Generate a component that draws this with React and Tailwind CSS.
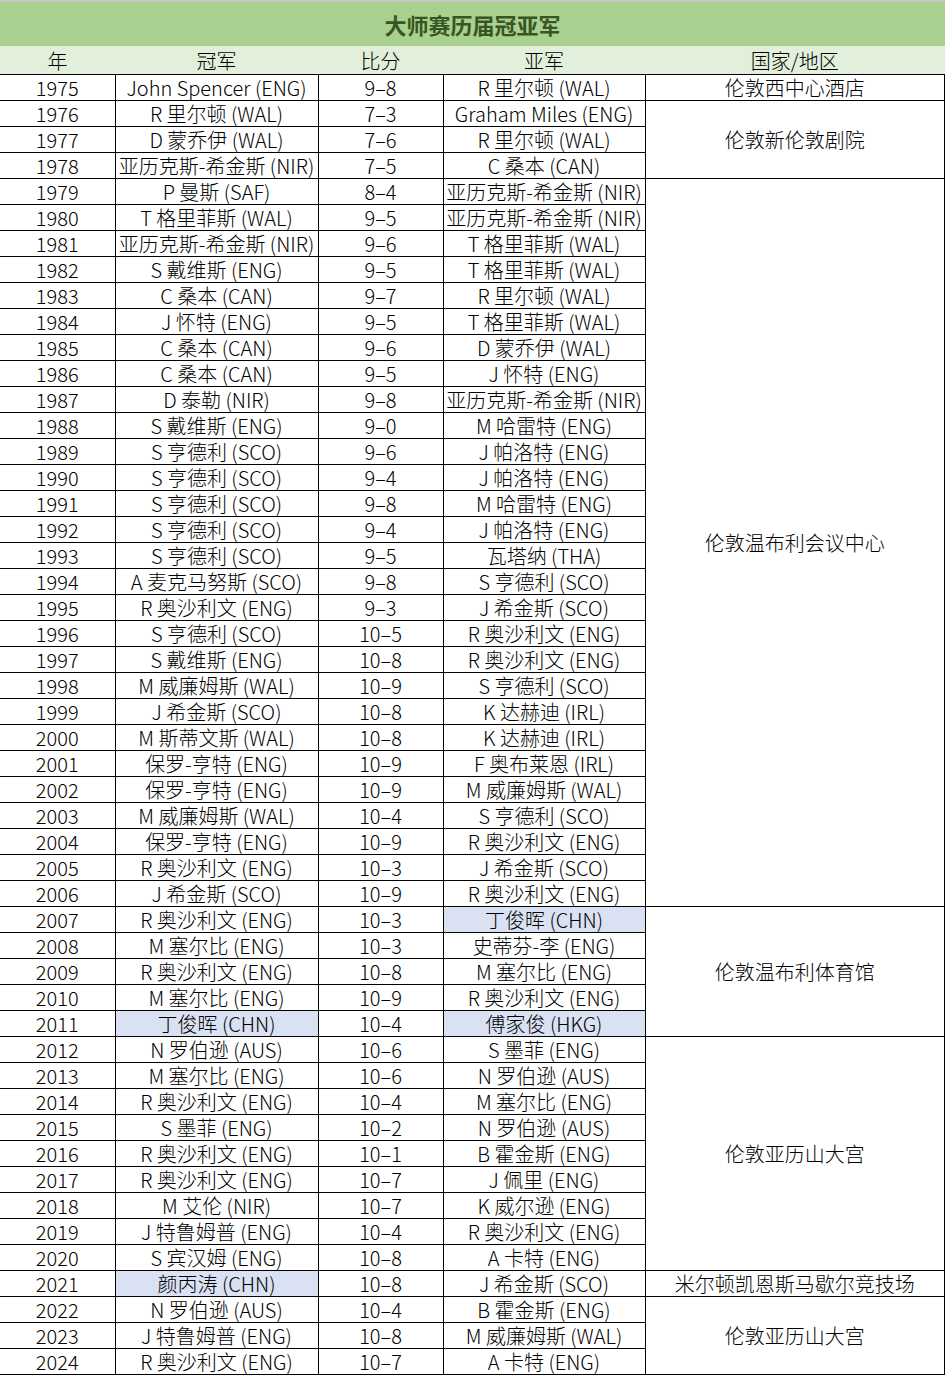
import React from "react";

const rows = [
  ["1975", "John Spencer (ENG)", "9–8", "R 里尔顿 (WAL)"],
  ["1976", "R 里尔顿 (WAL)", "7–3", "Graham Miles (ENG)"],
  ["1977", "D 蒙乔伊 (WAL)", "7–6", "R 里尔顿 (WAL)"],
  ["1978", "亚历克斯-希金斯 (NIR)", "7–5", "C 桑本 (CAN)"],
  ["1979", "P 曼斯 (SAF)", "8–4", "亚历克斯-希金斯 (NIR)"],
  ["1980", "T 格里菲斯 (WAL)", "9–5", "亚历克斯-希金斯 (NIR)"],
  ["1981", "亚历克斯-希金斯 (NIR)", "9–6", "T 格里菲斯 (WAL)"],
  ["1982", "S 戴维斯 (ENG)", "9–5", "T 格里菲斯 (WAL)"],
  ["1983", "C 桑本 (CAN)", "9–7", "R 里尔顿 (WAL)"],
  ["1984", "J 怀特 (ENG)", "9–5", "T 格里菲斯 (WAL)"],
  ["1985", "C 桑本 (CAN)", "9–6", "D 蒙乔伊 (WAL)"],
  ["1986", "C 桑本 (CAN)", "9–5", "J 怀特 (ENG)"],
  ["1987", "D 泰勒 (NIR)", "9–8", "亚历克斯-希金斯 (NIR)"],
  ["1988", "S 戴维斯 (ENG)", "9–0", "M 哈雷特 (ENG)"],
  ["1989", "S 亨德利 (SCO)", "9–6", "J 帕洛特 (ENG)"],
  ["1990", "S 亨德利 (SCO)", "9–4", "J 帕洛特 (ENG)"],
  ["1991", "S 亨德利 (SCO)", "9–8", "M 哈雷特 (ENG)"],
  ["1992", "S 亨德利 (SCO)", "9–4", "J 帕洛特 (ENG)"],
  ["1993", "S 亨德利 (SCO)", "9–5", "瓦塔纳 (THA)"],
  ["1994", "A 麦克马努斯 (SCO)", "9–8", "S 亨德利 (SCO)"],
  ["1995", "R 奥沙利文 (ENG)", "9–3", "J 希金斯 (SCO)"],
  ["1996", "S 亨德利 (SCO)", "10–5", "R 奥沙利文 (ENG)"],
  ["1997", "S 戴维斯 (ENG)", "10–8", "R 奥沙利文 (ENG)"],
  ["1998", "M 威廉姆斯 (WAL)", "10–9", "S 亨德利 (SCO)"],
  ["1999", "J 希金斯 (SCO)", "10–8", "K 达赫迪 (IRL)"],
  ["2000", "M 斯蒂文斯 (WAL)", "10–8", "K 达赫迪 (IRL)"],
  ["2001", "保罗-亨特 (ENG)", "10–9", "F 奥布莱恩 (IRL)"],
  ["2002", "保罗-亨特 (ENG)", "10–9", "M 威廉姆斯 (WAL)"],
  ["2003", "M 威廉姆斯 (WAL)", "10–4", "S 亨德利 (SCO)"],
  ["2004", "保罗-亨特 (ENG)", "10–9", "R 奥沙利文 (ENG)"],
  ["2005", "R 奥沙利文 (ENG)", "10–3", "J 希金斯 (SCO)"],
  ["2006", "J 希金斯 (SCO)", "10–9", "R 奥沙利文 (ENG)"],
  ["2007", "R 奥沙利文 (ENG)", "10–3", "丁俊晖 (CHN)"],
  ["2008", "M 塞尔比 (ENG)", "10–3", "史蒂芬-李 (ENG)"],
  ["2009", "R 奥沙利文 (ENG)", "10–8", "M 塞尔比 (ENG)"],
  ["2010", "M 塞尔比 (ENG)", "10–9", "R 奥沙利文 (ENG)"],
  ["2011", "丁俊晖 (CHN)", "10–4", "傅家俊 (HKG)"],
  ["2012", "N 罗伯逊 (AUS)", "10–6", "S 墨菲 (ENG)"],
  ["2013", "M 塞尔比 (ENG)", "10–6", "N 罗伯逊 (AUS)"],
  ["2014", "R 奥沙利文 (ENG)", "10–4", "M 塞尔比 (ENG)"],
  ["2015", "S 墨菲 (ENG)", "10–2", "N 罗伯逊 (AUS)"],
  ["2016", "R 奥沙利文 (ENG)", "10–1", "B 霍金斯 (ENG)"],
  ["2017", "R 奥沙利文 (ENG)", "10–7", "J 佩里 (ENG)"],
  ["2018", "M 艾伦 (NIR)", "10–7", "K 威尔逊 (ENG)"],
  ["2019", "J 特鲁姆普 (ENG)", "10–4", "R 奥沙利文 (ENG)"],
  ["2020", "S 宾汉姆 (ENG)", "10–8", "A 卡特 (ENG)"],
  ["2021", "颜丙涛 (CHN)", "10–8", "J 希金斯 (SCO)"],
  ["2022", "N 罗伯逊 (AUS)", "10–4", "B 霍金斯 (ENG)"],
  ["2023", "J 特鲁姆普 (ENG)", "10–8", "M 威廉姆斯 (WAL)"],
  ["2024", "R 奥沙利文 (ENG)", "10–7", "A 卡特 (ENG)"],
];

// 场馆合并单元格：起始年份 -> [名称, 跨行数]
const venues = {
  "1975": ["伦敦西中心酒店", 1],
  "1976": ["伦敦新伦敦剧院", 3],
  "1979": ["伦敦温布利会议中心", 28],
  "2007": ["伦敦温布利体育馆", 5],
  "2012": ["伦敦亚历山大宫", 9],
  "2021": ["米尔顿凯恩斯马歇尔竞技场", 1],
  "2022": ["伦敦亚历山大宫", 3],
};

// 中国选手高亮
const hlChamp = ["2011", "2021"];
const hlRunner = ["2007", "2011"];

const cell = "border border-black h-[26px] p-0 pt-[2px] leading-[22px] text-center whitespace-nowrap";
const head = "h-[28px] p-0 pt-[3px] leading-[22px] font-light border-b border-black";

export default function App() {
  return (
    <div
      className="w-[945px] bg-white text-[20px] font-light text-black"
      style={{ fontFamily: '"Noto Sans CJK SC", "Noto Sans", sans-serif' }}
    >
      <div className="h-[46px] border-t-2 border-[#c8c8c8] bg-[#a9d08e] flex items-center justify-center text-[22px] leading-[28px] font-bold text-[#375623]">
        大师赛历届冠亚军
      </div>
      <table className="w-[945px] table-fixed border-collapse">
        <colgroup>
          <col className="w-[115px]" />
          <col className="w-[203px]" />
          <col className="w-[125px]" />
          <col className="w-[202px]" />
          <col />
        </colgroup>
        <thead>
          <tr className="bg-[#e2efda]">
            <th className={head}>年</th>
            <th className={head}>冠军</th>
            <th className={head}>比分</th>
            <th className={head}>亚军</th>
            <th className={head}>国家/地区</th>
          </tr>
        </thead>
        <tbody>
          {rows.map((r) => (
            <tr key={r[0]}>
              <td className={cell + " border-l-0"}>{r[0]}</td>
              <td className={cell + (hlChamp.includes(r[0]) ? " bg-[#d9e1f2]" : "")}>{r[1]}</td>
              <td className={cell}>{r[2]}</td>
              <td className={cell + (hlRunner.includes(r[0]) ? " bg-[#d9e1f2]" : "")}>{r[3]}</td>
              {venues[r[0]] && (
                <td rowSpan={venues[r[0]][1]} className={cell}>
                  {venues[r[0]][0]}
                </td>
              )}
            </tr>
          ))}
        </tbody>
      </table>
    </div>
  );
}
